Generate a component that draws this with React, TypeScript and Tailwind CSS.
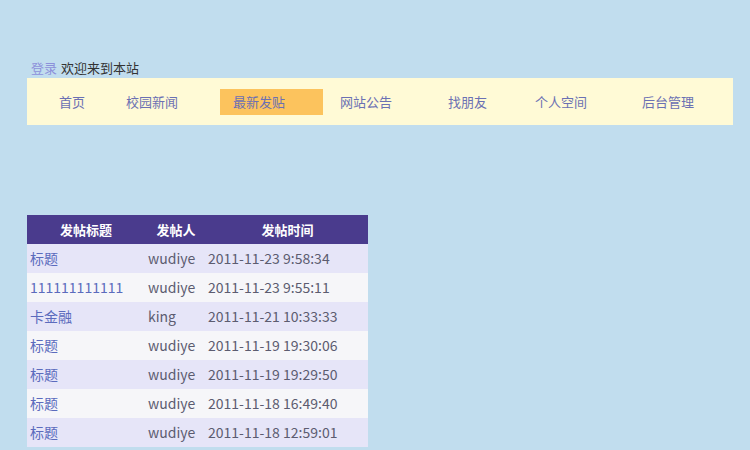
const navItems = [
  { label: '首页', ml: 'ml-0' },
  { label: '校园新闻', ml: 'ml-[41px]' },
  { label: '最新发贴', ml: 'ml-[42px]', active: true },
  { label: '网站公告', ml: 'ml-[17px]' },
  { label: '找朋友', ml: 'ml-[56px]' },
  { label: '个人空间', ml: 'ml-[48px]' },
  { label: '后台管理', ml: 'ml-[55px]' },
];

const posts = [
  { title: '标题', user: 'wudiye', time: '2011-11-23 9:58:34' },
  { title: '111111111111', user: 'wudiye', time: '2011-11-23 9:55:11' },
  { title: '卡金融', user: 'king', time: '2011-11-21 10:33:33' },
  { title: '标题', user: 'wudiye', time: '2011-11-19 19:30:06' },
  { title: '标题', user: 'wudiye', time: '2011-11-19 19:29:50' },
  { title: '标题', user: 'wudiye', time: '2011-11-18 16:49:40' },
  { title: '标题', user: 'wudiye', time: '2011-11-18 12:59:01' },
];

export default function App() {
  return (
    <div className="h-[450px] w-[750px] overflow-hidden bg-[#c1ddee] pt-[57px] font-['Noto_Sans_CJK_SC',sans-serif]">
      {/* 登录栏 */}
      <div className="flex h-[21px] items-center pl-[31px] text-[13px] leading-none">
        <a className="text-[#8d90da]">登录</a>
        <span className="ml-[4px] text-[#333]">欢迎来到本站</span>
      </div>

      {/* 导航 */}
      <div className="ml-[27px] mt-0 flex h-[47px] w-[706px] items-center bg-[#fffad6] pl-[32px] text-[13px] text-[#6b70b3]">
        {navItems.map((item) =>
          item.active ? (
            <span
              key={item.label}
              className={`${item.ml} flex h-[26px] w-[103px] items-center bg-[#fcc35d] pl-[13px]`}
            >
              {item.label}
            </span>
          ) : (
            <span key={item.label} className={item.ml}>
              {item.label}
            </span>
          )
        )}
      </div>

      {/* 最新帖子 */}
      <table className="ml-[27px] mt-[90px] w-[341px] border-collapse text-[14px]">
        <thead>
          <tr className="h-[29px] bg-[#4a3b8d] text-[13px] font-bold text-white">
            <th className="w-[118px] text-center">发帖标题</th>
            <th className="w-[62px] text-center">发帖人</th>
            <th className="text-center">发帖时间</th>
          </tr>
        </thead>
        <tbody>
          {posts.map((p, i) => (
            <tr key={i} className={`h-[29px] ${i % 2 === 0 ? 'bg-[#e6e5f8]' : 'bg-[#f6f6f9]'}`}>
              <td className="pl-[3px] text-[#5b6bbd]">{p.title}</td>
              <td className="pl-[3px] text-[#5c5c70]">{p.user}</td>
              <td className="pl-[1px] text-[#5c5c70]">{p.time}</td>
            </tr>
          ))}
        </tbody>
      </table>
    </div>
  );
}
